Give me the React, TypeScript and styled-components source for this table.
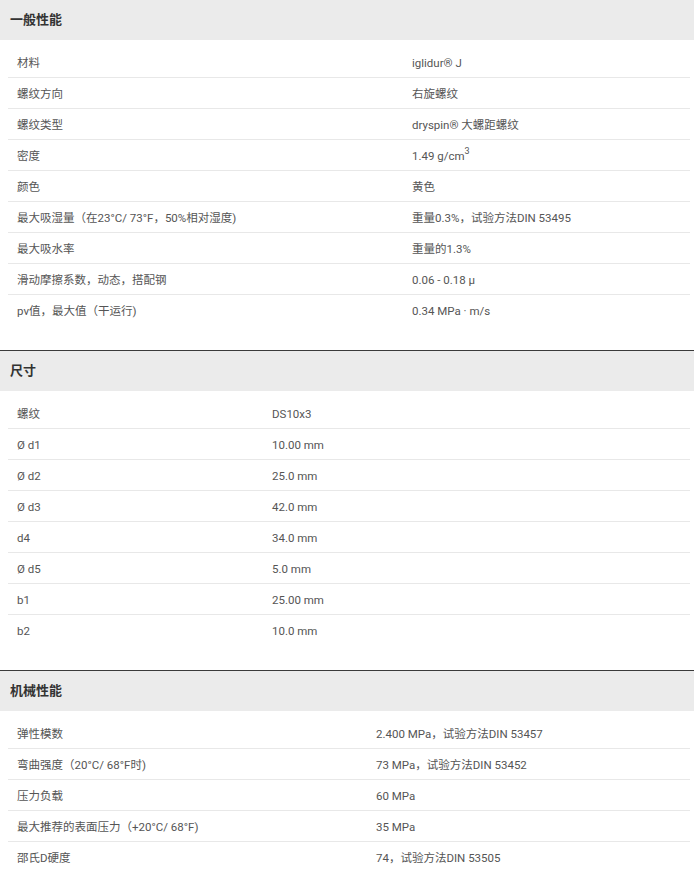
import React from "react";
import styled, { createGlobalStyle } from "styled-components";

const Global = createGlobalStyle`
  html, body { margin: 0; padding: 0; background: #ffffff; }
  body { font-family: Roboto, "Noto Sans CJK SC", sans-serif; }
`;

const Page = styled.div`
  width: 694px;
  display: flex;
  flex-direction: column;
`;

const Section = styled.section<{ $first?: boolean }>`
  border-top: ${(p) => (p.$first ? "none" : "1px solid #3a3a3a")};
  margin-bottom: 24px;
`;

const Header = styled.h2`
  margin: 0;
  height: 40px;
  box-sizing: border-box;
  display: flex;
  align-items: center;
  padding: 0 0 2px 10px;
  background: #ebebeb;
  font-family: Roboto, "Noto Sans CJK SC", sans-serif;
  font-size: 13px;
  font-weight: 700;
  line-height: 1;
  color: #333333;
`;

const Table = styled.div`
  margin: 7px 4px 0 8px;
  display: flex;
  flex-direction: column;
`;

const Row = styled.div<{ $labelWidth: number }>`
  display: grid;
  grid-template-columns: ${(p) => p.$labelWidth}px 1fr;
  height: 31px;
  box-sizing: border-box;
  align-items: center;
  padding-top: 3px;
  border-bottom: 1px solid #e8e8e8;
  &:last-child {
    border-bottom: none;
  }
`;

const Cell = styled.div`
  padding-left: 9px;
  font-size: 11.5px;
  color: #555555;
  white-space: nowrap;
  line-height: 1;
`;

const Sup = styled.sup`
  font-size: 9px;
  vertical-align: 6px;
  line-height: 0;
`;

type Item = [React.ReactNode, React.ReactNode];

const general: Item[] = [
  ["材料", "iglidur® J"],
  ["螺纹方向", "右旋螺纹"],
  ["螺纹类型", "dryspin® 大螺距螺纹"],
  ["密度", <>1.49 g/cm<Sup>3</Sup></>],
  ["颜色", "黄色"],
  ["最大吸湿量（在23°C/ 73°F，50%相对湿度)", "重量0.3%，试验方法DIN 53495"],
  ["最大吸水率", "重量的1.3%"],
  ["滑动摩擦系数，动态，搭配钢", "0.06 - 0.18 μ"],
  ["pv值，最大值（干运行)", "0.34 MPa · m/s"],
];

const dims: Item[] = [
  ["螺纹", "DS10x3"],
  ["Ø d1", "10.00 mm"],
  ["Ø d2", "25.0 mm"],
  ["Ø d3", "42.0 mm"],
  ["d4", "34.0 mm"],
  ["Ø d5", "5.0 mm"],
  ["b1", "25.00 mm"],
  ["b2", "10.0 mm"],
];

const mech: Item[] = [
  ["弹性模数", "2.400 MPa，试验方法DIN 53457"],
  ["弯曲强度（20°C/ 68°F时)", "73 MPa，试验方法DIN 53452"],
  ["压力负载", "60 MPa"],
  ["最大推荐的表面压力（+20°C/ 68°F)", "35 MPa"],
  ["邵氏D硬度", "74，试验方法DIN 53505"],
];

function PropTable({
  title,
  items,
  labelWidth,
  first,
}: {
  title: string;
  items: Item[];
  labelWidth: number;
  first?: boolean;
}) {
  return (
    <Section $first={first}>
      <Header>{title}</Header>
      <Table>
        {items.map(([k, v], i) => (
          <Row key={i} $labelWidth={labelWidth}>
            <Cell>{k}</Cell>
            <Cell>{v}</Cell>
          </Row>
        ))}
      </Table>
    </Section>
  );
}

export default function App() {
  return (
    <>
      <Global />
      <Page>
        <PropTable title="一般性能" items={general} labelWidth={395} first />
        <PropTable title="尺寸" items={dims} labelWidth={255} />
        <PropTable title="机械性能" items={mech} labelWidth={359} />
      </Page>
    </>
  );
}
